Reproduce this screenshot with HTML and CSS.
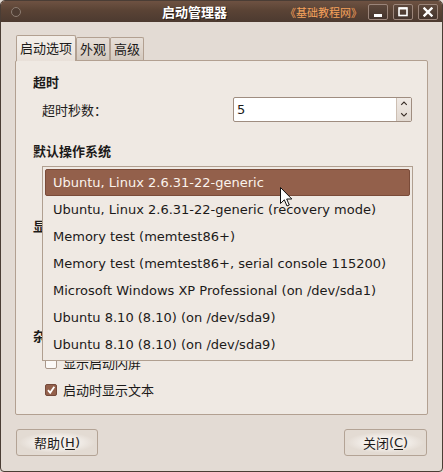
FILE: index.html
```html
<!DOCTYPE html>
<html lang="zh-CN">
<head>
<meta charset="utf-8">
<title>启动管理器</title>
<link rel="stylesheet" href="styles.css">
</head>
<body>
<div class="window">
  <div class="titlebar">
    <span class="menu-dot"></span>
    <span class="title cjk">启动管理器</span>
    <span class="watermark cjk">《基础教程网》</span>
    <div class="wm-buttons">
      <span class="wm-btn"><svg width="10" height="10" viewBox="0 0 10 10"><rect x="1" y="7" width="8" height="3" fill="#fff"/></svg></span>
      <span class="wm-btn"><svg width="10" height="10" viewBox="0 0 10 10"><rect x="1" y="1" width="8" height="7.5" fill="none" stroke="#fff" stroke-width="1.6"/><rect x="1" y="0.5" width="8" height="2" fill="#fff"/></svg></span>
      <span class="wm-btn"><svg width="10" height="10" viewBox="0 0 10 10"><path d="M1.5 1.5 L8.5 8.5 M8.5 1.5 L1.5 8.5" stroke="#fff" stroke-width="2.4" stroke-linecap="square"/></svg></span>
    </div>
  </div>
  <div class="body">
    <div class="tabs cjk">
      <span class="tab active">启动选项</span>
      <span class="tab">外观</span>
      <span class="tab">高级</span>
    </div>
    <div class="panel">
      <div class="heading cjk">超时</div>
      <div class="field-row">
        <span class="label cjk">超时秒数：</span>
        <div class="spin">
          <span class="spin-value">5</span>
          <span class="spin-btns">
            <svg width="15" height="25" viewBox="0 0 15 25"><path d="M4.5 7.5 L7.5 4.5 L10.5 7.5" fill="none" stroke="#3a2f28" stroke-width="1.2"/><path d="M4.5 16.5 L7.5 19.5 L10.5 16.5" fill="none" stroke="#3a2f28" stroke-width="1.2"/></svg>
          </span>
        </div>
      </div>
      <div class="heading h-os cjk">默认操作系统</div>
      <div class="combo"></div>
      <div class="heading h-display cjk">显示</div>
      <div class="field-row"><div class="combo small"></div></div>
      <div class="field-row"><div class="combo small"></div></div>
      <div class="heading h-misc cjk">杂项</div>
      <div class="check-row first cjk"><span class="checkbox"></span>显示启动闪屏</div>
      <div class="check-row cjk"><span class="checkbox checked"><svg width="10" height="10" viewBox="0 0 10 10"><path d="M2 5.2 L4.2 7.8 L8.3 1.8" fill="none" stroke="#fff" stroke-width="1.8"/></svg></span>启动时显示文本</div>
    </div>
    <div class="buttons">
      <span class="button"><span class="cjk">帮助</span>(<u>H</u>)</span>
      <span class="button right"><span class="cjk">关闭</span>(<u>C</u>)</span>
    </div>
  </div>
  <ul class="popup">
    <li class="selected">Ubuntu, Linux 2.6.31-22-generic</li>
    <li>Ubuntu, Linux 2.6.31-22-generic (recovery mode)</li>
    <li>Memory test (memtest86+)</li>
    <li>Memory test (memtest86+, serial console 115200)</li>
    <li>Microsoft Windows XP Professional (on /dev/sda1)</li>
    <li>Ubuntu 8.10 (8.10) (on /dev/sda9)</li>
    <li>Ubuntu 8.10 (8.10) (on /dev/sda9)</li>
  </ul>
  <svg class="cursor" width="14" height="21" viewBox="0 0 14 21"><path d="M0.5 0.5 L0.5 16.5 L4.3 12.8 L7 19 L9.3 18 L6.7 12 L11.8 12 Z" fill="#fff" stroke="#111" stroke-width="1" stroke-linejoin="round"/></svg>
</div>
</body>
</html>
```
FILE: styles.css
```css
* { box-sizing: border-box; }
html, body { margin: 0; padding: 0; background: #e3dbd4; }
body {
  font-family: "DejaVu Sans", "Noto Sans CJK SC", sans-serif;
  font-size: 13px;
  color: #1c1a19;
}
.cjk { font-family: "Noto Sans CJK SC", "DejaVu Sans", sans-serif; }
.window {
  position: relative;
  width: 443px;
  height: 472px;
  border: 1px solid #4a3d35;
  border-radius: 5px 5px 4px 4px;
  background: #e3dbd4;
  overflow: hidden;
  display: flex;
  flex-direction: column;
}
.titlebar {
  height: 21px;
  flex: none;
  display: flex;
  align-items: center;
  background: linear-gradient(#6e5242, #5a4335 45%, #4c3a30);
}
.menu-dot {
  width: 10px;
  height: 10px;
  margin-left: 10px;
  border-radius: 50%;
  border: 1px solid #8d7d72;
  background: #4f3d33;
}
.title {
  margin-left: 141px;
  font-weight: bold;
  color: #fff;
  text-shadow: 1px 1px 0 #2a1d16;
  line-height: 16px;
}
.watermark {
  margin-left: auto;
  margin-right: 6px;
  color: #f6a25c;
  font-size: 11px;
  line-height: 14px;
}
.wm-buttons { display: flex; gap: 5px; margin-right: 4px; }
.wm-btn {
  width: 20px;
  height: 16px;
  border: 1px solid #9b857a;
  border-radius: 2px;
  background: linear-gradient(#5d483c, #44342c);
  display: flex;
  align-items: center;
  justify-content: center;
}
.body {
  flex: 1;
  display: flex;
  flex-direction: column;
  padding: 13px 14px 14px;
}
.tabs {
  display: flex;
  align-items: flex-end;
  margin-left: 1px;
  height: 25px;
  position: relative;
  z-index: 1;
}
.tab {
  height: 23px;
  padding: 0 3px;
  border: 1px solid #b2a091;
  border-bottom: none;
  border-radius: 2px 2px 0 0;
  background: linear-gradient(#e6ded7, #ddd3ca 60%, #d3c9bf);
  line-height: 21px;
}
.tab.active {
  height: 26px;
  margin-bottom: -1px;
  line-height: 24px;
  background: linear-gradient(#f3eee9, #efe9e3 55%, #e8e0d9);
}
.panel {
  height: 355px;
  border: 1px solid #b2a091;
  border-radius: 2px;
  background: #efe9e3;
  padding: 12px 15px 0 17px;
  display: flex;
  flex-direction: column;
}
.heading { font-weight: bold; line-height: 18px; }
.h-os { margin-top: 20px; }
.h-display { margin-top: 25px; }
.h-misc { margin-top: 28px; }
.field-row {
  display: flex;
  align-items: center;
  height: 26px;
  margin-top: 6px;
  padding-left: 9px;
}
.field-row:nth-child(2) { height: 25px; }
.spin {
  margin-left: auto;
  width: 179px;
  height: 25px;
  display: flex;
  border: 1px solid #9f8d80;
  border-radius: 2px;
  background: #fff;
}
.spin-value { flex: 1; padding-left: 3px; line-height: 23px; }
.spin-btns {
  width: 15px;
  display: flex;
  align-items: center;
  justify-content: center;
  border-left: 1px solid #cdbfb3;
  background: linear-gradient(#f0eae5, #e2d9d1);
}
.combo {
  margin: 6px 0 0 9px;
  height: 26px;
  border: 1px solid #b2a091;
  border-radius: 3px;
  background: #e8e0d9;
}
.combo.small { margin: 0 0 0 auto; width: 200px; }
.check-row {
  display: flex;
  align-items: center;
  gap: 6px;
  height: 18px;
  margin-top: 9px;
  padding-left: 12px;
  line-height: 18px;
}
.checkbox {
  width: 12px;
  height: 12px;
  border: 1px solid #a8978a;
  border-radius: 2px;
  background: #fbf9f7;
  display: flex;
  align-items: center;
  justify-content: center;
}
.checkbox.checked { background: #93604b; border-color: #74493a; }
.buttons {
  display: flex;
  justify-content: space-between;
  margin-top: 14px;
  padding: 0 1px;
}
.button {
  width: 82px;
  height: 27px;
  display: flex;
  align-items: center;
  justify-content: center;
  border: 1px solid #b3a395;
  border-radius: 3px;
  background: radial-gradient(ellipse 48% 42% at 50% 50%, #f7f3ef 0%, #f1ece7 60%, rgba(241,236,231,0) 100%), #e3dbd3;
}
.button.right { width: 83px; }
.button u { text-decoration: underline; text-underline-offset: 2px; }
.popup {
  position: absolute;
  left: 41px;
  top: 165px;
  width: 371px;
  height: 195px;
  margin: 0;
  padding: 2px;
  list-style: none;
  border: 1px solid #b09f90;
  background: #efe9e3;
  z-index: 5;
}
.popup li {
  height: 27px;
  line-height: 25px;
  padding-left: 7px;
  border: 1px solid transparent;
  border-radius: 2px;
  white-space: nowrap;
}
.popup li.selected {
  background: #93604b;
  border-color: #7a4b39;
  color: #fbf3ec;
}
.cursor {
  position: absolute;
  left: 279px;
  top: 186px;
  z-index: 6;
}
```
